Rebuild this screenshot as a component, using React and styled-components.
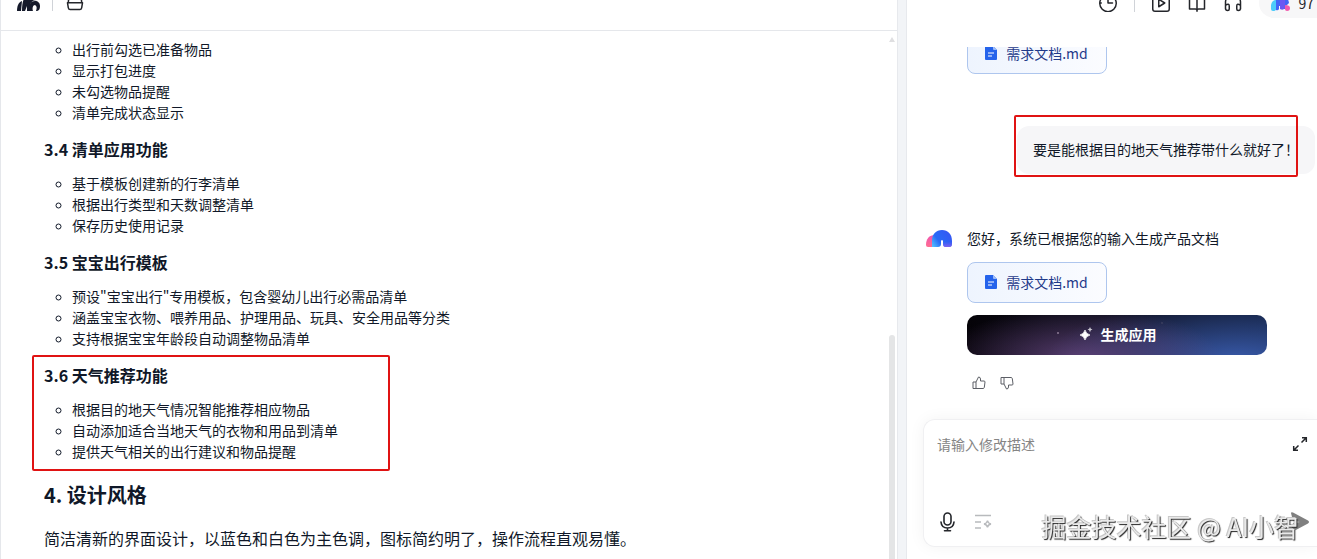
import React from "react";
import styled, { createGlobalStyle, css } from "styled-components";

const GlobalStyle = createGlobalStyle`
  *, *::before, *::after { box-sizing: border-box; }
  body {
    margin: 0;
    background: #fff;
    color: #101828;
    font-family: "Noto Sans CJK SC", "Noto Sans", sans-serif;
    font-size: 14px;
  }
  h2, h3, p, ul { margin: 0; padding: 0; }
  button, textarea { font: inherit; }
`;

const Page = styled.div`
  display: flex;
  height: 100vh;
  overflow: hidden;
`;

const DocPanel = styled.main`
  flex: 1;
  min-width: 0;
  display: flex;
  flex-direction: column;
  border-left: 1px solid #e5e7eb;
`;

const Gutter = styled.div`
  flex: none;
  width: 10px;
  background: #f2f4f7;
  border: solid #e7e9ed;
  border-width: 0 1px;
`;

const ChatPanel = styled.aside`
  flex: none;
  width: 410px;
  display: flex;
  flex-direction: column;
`;

const Header = styled.header`
  flex: none;
  display: flex;
  align-items: flex-end;
  overflow: hidden;
  height: ${(p) => (p.$chat ? 47 : 31)}px;
  padding-bottom: ${(p) => (p.$chat ? 16 : 0)}px;
  border-bottom: ${(p) => (p.$chat ? "none" : "1px solid #e5e7eb")};
`;

const HeaderBar = styled.div`
  flex: 1 0 auto;
  height: 56px;
  display: flex;
  align-items: center;
  justify-content: ${(p) => (p.$end ? "flex-end" : "flex-start")};
  gap: ${(p) => (p.$end ? 16 : 12)}px;
  padding-left: 16px;
`;

const Divider = styled.span`
  width: 1px;
  height: 18px;
  background: #d0d3d8;
`;

const IconButton = styled.button`
  display: inline-flex;
  align-items: center;
  justify-content: center;
  flex: none;
  width: ${(p) => p.$size || 20}px;
  height: ${(p) => p.$size || 20}px;
  padding: 0;
  border: 0;
  background: none;
  color: ${(p) => p.$color || "#24262b"};
  cursor: pointer;
`;

const Credits = styled.button`
  display: flex;
  align-items: center;
  gap: 8px;
  height: 30px;
  padding: 0 3px 0 12px;
  border: 0;
  border-radius: 15px 0 0 15px;
  background: #f7f7f8;
  color: #24262b;
`;

const DocBody = styled.div`
  flex: 1;
  min-height: 0;
  display: flex;
  overflow: hidden;
`;

const Article = styled.article`
  flex: 1;
  min-width: 0;
  padding: 8px 24px 0 43px;
`;

const frame = css`
  content: "";
  position: absolute;
  border: 2px solid #e01313;
  border-radius: 2px;
  pointer-events: none;
`;

const Section = styled.section`
  position: relative;
  padding-top: ${(p) => (p.$first ? 0 : 14)}px;
  ${(p) =>
    p.$framed &&
    css`
      &::after {
        ${frame}
        top: 6px;
        bottom: -9px;
        left: -12px;
        width: 358px;
      }
    `}
`;

const SubTitle = styled.h3`
  font-size: 16px;
  line-height: 24px;
  margin-bottom: 12px;
`;

const Title = styled.h2`
  font-size: 20px;
  line-height: 30px;
  margin: 18px 0 16px;
`;

const Paragraph = styled.p`
  font-size: 16px;
  line-height: 24px;
`;

const List = styled.ul`
  list-style: circle;
  padding-left: 28px;
  line-height: 21px;
  li::marker { font-size: 12px; }
`;

const ScrollTrack = styled.div`
  flex: none;
  width: 6px;
  margin-right: 2px;
  padding-top: 6px;
  display: flex;
  flex-direction: column;
  justify-content: space-between;
`;

const ScrollArrow = styled.span`
  border: 3px solid transparent;
  border-top: 0;
  border-bottom: 5px solid #dfdfe1;
`;

const ScrollThumb = styled.span`
  height: 43%;
  border-radius: 3px 3px 0 0;
  background: #e4e5e6;
`;

const Messages = styled.div`
  flex: 1;
  min-height: 0;
  overflow: hidden;
  display: flex;
  flex-direction: column;
  justify-content: flex-end;
  padding: 0 2px 16px 18px;
`;

const FileCard = styled.button`
  flex: none;
  display: flex;
  align-items: center;
  justify-content: center;
  gap: 8px;
  width: 140px;
  height: 41px;
  padding: 0 2px 2px 0;
  border: 1px solid #aec6ee;
  border-radius: 8px;
  background: linear-gradient(90deg, #eef4fe, #fbfcff);
  color: #1f3a8a;
`;

const EarlierReply = styled.div`
  flex: none;
  padding-left: 42px;
`;

const Bubble = styled.div`
  flex: none;
  position: relative;
  align-self: flex-end;
  margin: 52px 0 54px;
  padding: 12px 16px 14px;
  border-radius: 12px;
  background: #f6f6f8;
  line-height: 22px;
  white-space: nowrap;
  &::after {
    ${frame}
    inset: -11px 17px -3px -3px;
  }
`;

const Reply = styled.div`
  flex: none;
  display: flex;
  gap: 14px;
`;

const Avatar = styled.span`
  flex: none;
  width: 28px;
  height: 20px;
  display: flex;
  align-items: center;
  justify-content: center;
`;

const ReplyBody = styled.div`
  display: flex;
  flex-direction: column;
  gap: 12px;
`;

const ReplyText = styled.p`
  line-height: 20px;
  padding-bottom: 2px;
`;

const GenerateButton = styled.button`
  display: flex;
  align-items: center;
  justify-content: center;
  gap: 8px;
  width: 300px;
  height: 40px;
  padding: 0 0 2px 2px;
  border: 0;
  border-radius: 10px;
  color: #fff;
  font-weight: 700;
  background:
    radial-gradient(circle at 91px 18px, #75647f 0 1px, transparent 1px),
    radial-gradient(circle at 195px 8px, #33385a 0 1px, transparent 1px),
    radial-gradient(ellipse 140px 52px at 38% 110%, #6b4a86cc, transparent),
    radial-gradient(ellipse 190px 60px at 90% 110%, #3859a8, transparent),
    linear-gradient(90deg, #050308, #10101f 50%, #101c38);
`;

const Feedback = styled.div`
  display: flex;
  gap: 12px;
  padding: 8px 4px 0;
`;

const ComposerArea = styled.div`
  flex: none;
  padding: 12px 0 12px 16px;
`;

const Composer = styled.form`
  display: flex;
  flex-direction: column;
  justify-content: space-between;
  height: 128px;
  padding: 14px 7px 14px 13px;
  border: 1px solid #f0f0f2;
  border-right: 0;
  border-radius: 12px 0 0 12px;
  background: #fff;
  box-shadow: 0 0 16px rgba(0, 0, 0, 0.05);
`;

const ComposerRow = styled.div`
  display: flex;
  align-items: ${(p) => (p.$top ? "flex-start" : "center")};
  gap: 16px;
`;

const Input = styled.textarea`
  flex: 1;
  min-width: 0;
  height: 40px;
  padding: 0;
  border: 0;
  outline: 0;
  resize: none;
  line-height: 20px;
  background: none;
  &::placeholder { color: #858585; opacity: 1; }
`;

const Spacer = styled.span`
  flex: 1;
`;

const Watermark = styled.div`
  position: fixed;
  right: 18px;
  bottom: 15px;
  font-size: 25px;
  line-height: 36px;
  white-space: nowrap;
  color: #e9e9e9;
  text-shadow: 1px 1px 1px #222, -1px -1px 0 #c8c8c8;
  pointer-events: none;
`;

const Stroke = ({ size = 18, width = 2, children }) => (
  <svg width={size} height={size} viewBox="0 0 24 24" fill="none" stroke="currentColor"
    strokeWidth={width} strokeLinecap="round" strokeLinejoin="round" aria-hidden="true">
    {children}
  </svg>
);

const MonoLogo = () => (
  <svg width="23" height="17" viewBox="0 0 23 17" fill="#151a2b" aria-hidden="true">
    <path d="M0 17C0 11 2 8 5 7L4 17Z" />
    <path d="M5 17C5 5 8 1 13 1C17 1 20 3 20 6C15 6 13 9 13 12V17H10V12L8 17Z" />
    <path d="M12 17C11 10 14 7 18 7C21 7 23 9 23 12C23 15 22 17 19 17C20 14 20 12 18 11C16 11 15 14 16 17Z" />
  </svg>
);

const CloudLogo = () => (
  <svg width="26" height="17" viewBox="0 0 26 17" aria-hidden="true">
    <defs>
      <linearGradient id="arch" x1="0" y1="1" x2="1" y2="0.4">
        <stop offset="0" stopColor="#55c7ff" />
        <stop offset="0.4" stopColor="#286bf7" />
        <stop offset="1" stopColor="#3458f3" />
      </linearGradient>
      <linearGradient id="side" x1="0" y1="0" x2="0" y2="1">
        <stop offset="0" stopColor="#ef55b0" />
        <stop offset="1" stopColor="#ff6d91" />
      </linearGradient>
      <linearGradient id="foot" x1="0" y1="0" x2="0" y2="1">
        <stop offset="0.4" stopColor="#705bf5" stopOpacity="0" />
        <stop offset="1" stopColor="#8160ee" />
      </linearGradient>
    </defs>
    <path d="M0 15C0 9 3 5 9 5L7 17H2Q0 17 0 15Z" fill="url(#side)" />
    <path d="M6 17V11C6 4 10 0 16 0C22 0 26 4 26 11V14Q26 17 23 17H20Q17 17 17 14V11Q16 9 15 11V14Q15 17 12 17Z" fill="url(#arch)" />
    <path d="M17 8H26V14Q26 17 23 17H20Q17 17 17 14Z" fill="url(#foot)" />
  </svg>
);

const CreditLogo = () => (
  <svg width="19" height="16" viewBox="0 0 19 16" aria-hidden="true">
    <path d="M4 14V6Q5 0 11 0Q17 1 18 8L14 12V14H10V11H8V14Q7 16 5 15Z" fill="#4264f6" />
    <path d="M0 14V10Q1 5 5 5V14Q5 16 2 16Q0 16 0 14Z" fill="#4bcbfa" />
    <path d="M9 4H14V13Q12 16 9 14Z" fill="#6c58f2" />
    <path d="M14 10Q19 10 19 13Q19 16 16 16Q14 16 14 14Z" fill="#f15bac" />
  </svg>
);

const FileIcon = () => (
  <svg width="14" height="16" viewBox="0 0 14 16" aria-hidden="true">
    <path d="M1 2Q1 1 2 1H9L13 5V14Q13 15 12 15H2Q1 15 1 14Z" fill="#2563eb" />
    <path d="M9 1L13 5H10Q9 5 9 4Z" fill="#9dbcf8" />
    <path d="M4 8H10M4 11H8" stroke="#fff" strokeWidth="1.2" />
  </svg>
);

const SparkIcon = () => (
  <svg width="13" height="14" viewBox="0 0 13 14" fill="#fff" aria-hidden="true">
    <path d="M5 3Q6 7 10 8Q6 9 5 13Q4 9 0 8Q4 7 5 3Z" stroke="#fff" strokeWidth=".7" />
    <path d="M10 0Q10.400 2.200 12.500 2.600Q10.400 3 10 5.200Q9.600 3 7.500 2.600Q9.600 2.200 10 0Z" opacity=".75" />
  </svg>
);

const ThumbIcon = ({ down }) => (
  <svg width="14" height="14" viewBox="0 0 14 14" fill="none" stroke="currentColor" strokeLinejoin="round" aria-hidden="true">
    <path
      transform={down ? "matrix(1 0 0 -1 0 14)" : undefined}
      d="M1 6H4V12.500H1ZM4 6L6.500 1Q8.500 1 8.500 3V5H12Q13 5 13 6L12.300 11.500Q12 12.500 11 12.500H4"
    />
  </svg>
);

const MicIcon = () => (
  <svg width="20" height="20" viewBox="0 0 20 20" fill="none" stroke="currentColor" strokeWidth="1.6" strokeLinecap="round" aria-hidden="true">
    <rect x="7" y="1" width="7" height="12" rx="3.500" />
    <path d="M4 10Q4.500 16 10.500 16Q16.500 16 17 10M10.500 16V18.500M7.500 18.800H13.500" />
  </svg>
);

const OptimizeIcon = () => (
  <svg width="18" height="16" viewBox="0 0 18 16" fill="none" stroke="currentColor" strokeWidth="1.400" aria-hidden="true">
    <path d="M1 1.500H17M1 8H7M1 14H7" />
    <path d="M13.500 6.500Q14 9.500 17 10Q14 10.500 13.500 13.500Q13 10.500 10 10Q13 9.500 13.500 6.500Z" />
  </svg>
);

const ExpandIcon = () => (
  <svg width="16" height="16" viewBox="0 0 16 16" fill="none" stroke="currentColor" strokeWidth="1.500" aria-hidden="true">
    <path d="M9.500 6.500L14 2M10 1.700H14.300V6M6.500 9.500L2 14M1.700 10V14.300H6" />
  </svg>
);

const SendIcon = () => (
  <svg width="20" height="20" viewBox="0 0 20 20" fill="currentColor" aria-hidden="true">
    <path d="M1 1Q1 0 3 0.500L18 8.500Q20 10 18 11.500L3 19.500Q1 20 1 18.500L3 11L10 10L3 9Z" />
  </svg>
);

const sections = [
  { items: ["出行前勾选已准备物品", "显示打包进度", "未勾选物品提醒", "清单完成状态显示"] },
  { title: "3.4 清单应用功能", items: ["基于模板创建新的行李清单", "根据出行类型和天数调整清单", "保存历史使用记录"] },
  {
    title: "3.5 宝宝出行模板",
    items: [
      '预设"宝宝出行"专用模板，包含婴幼儿出行必需品清单',
      "涵盖宝宝衣物、喂养用品、护理用品、玩具、安全用品等分类",
      "支持根据宝宝年龄段自动调整物品清单",
    ],
  },
  {
    title: "3.6 天气推荐功能",
    framed: true,
    items: ["根据目的地天气情况智能推荐相应物品", "自动添加适合当地天气的衣物和用品到清单", "提供天气相关的出行建议和物品提醒"],
  },
];

const DocumentFile = () => (
  <FileCard type="button">
    <FileIcon />
    需求文档.md
  </FileCard>
);

export default function App() {
  return (
    <Page lang="zh-CN">
      <GlobalStyle />
      <DocPanel>
        <Header>
          <HeaderBar>
            <MonoLogo />
            <Divider />
            <IconButton type="button" aria-label="项目">
              <Stroke size={20} width={1.8}>
                <path d="M3 13H21M4 12L5 3H19L20 12M3 13L4 19Q4 21 6 21H18Q20 21 20 19L21 13" />
              </Stroke>
            </IconButton>
          </HeaderBar>
        </Header>
        <DocBody>
          <Article>
            {sections.map((s, i) => (
              <Section key={i} $first={i === 0} $framed={s.framed}>
                {s.title && <SubTitle>{s.title}</SubTitle>}
                <List>
                  {s.items.map((item) => (
                    <li key={item}>{item}</li>
                  ))}
                </List>
              </Section>
            ))}
            <Title>4. 设计风格</Title>
            <Paragraph>简洁清新的界面设计，以蓝色和白色为主色调，图标简约明了，操作流程直观易懂。</Paragraph>
          </Article>
          <ScrollTrack>
            <ScrollArrow />
            <ScrollThumb />
          </ScrollTrack>
        </DocBody>
      </DocPanel>
      <Gutter />
      <ChatPanel>
        <Header $chat>
          <HeaderBar $end>
            <IconButton type="button" aria-label="历史">
              <Stroke>
                <path d="M4 5A11 11 0 1 0 20 5M1 12H3M12 5V12H18" />
              </Stroke>
            </IconButton>
            <Divider />
            <IconButton type="button" aria-label="演示">
              <Stroke>
                <rect x="1" y="1" width="22" height="22" rx="3" />
                <path d="M9 7V17L17 12Z" />
              </Stroke>
            </IconButton>
            <IconButton type="button" aria-label="文档">
              <Stroke>
                <path d="M12 4V23M12 4Q11 2 8 2H2V20H10Q12 20 12 22Q12 20 14 20H22V2H16Q13 2 12 4" />
              </Stroke>
            </IconButton>
            <IconButton type="button" aria-label="客服">
              <Stroke>
                <path d="M2 20V11A10 10 0 0 1 22 11V20M2 15Q7 12 7 16V20Q7 22 5 22Q2 22 2 19M22 15Q17 12 17 16V20Q17 22 19 22Q22 22 22 19" />
              </Stroke>
            </IconButton>
            <Credits type="button">
              <CreditLogo />
              97
            </Credits>
          </HeaderBar>
        </Header>
        <Messages>
          <EarlierReply>
            <DocumentFile />
          </EarlierReply>
          <Bubble>要是能根据目的地天气推荐带什么就好了！</Bubble>
          <Reply>
            <Avatar>
              <CloudLogo />
            </Avatar>
            <ReplyBody>
              <ReplyText>您好，系统已根据您的输入生成产品文档</ReplyText>
              <DocumentFile />
              <GenerateButton type="button">
                <SparkIcon />
                生成应用
              </GenerateButton>
              <Feedback>
                <IconButton type="button" aria-label="赞" $size={16} $color="#5c5f66">
                  <ThumbIcon />
                </IconButton>
                <IconButton type="button" aria-label="踩" $size={16} $color="#5c5f66">
                  <ThumbIcon down />
                </IconButton>
              </Feedback>
            </ReplyBody>
          </Reply>
        </Messages>
        <ComposerArea>
          <Composer onSubmit={(e) => e.preventDefault()}>
            <ComposerRow $top>
              <Input aria-label="修改描述" placeholder="请输入修改描述" />
              <IconButton type="button" aria-label="展开">
                <ExpandIcon />
              </IconButton>
            </ComposerRow>
            <ComposerRow>
              <IconButton type="button" aria-label="语音输入">
                <MicIcon />
              </IconButton>
              <IconButton type="button" aria-label="优化描述" $color="#b8babd">
                <OptimizeIcon />
              </IconButton>
              <Spacer />
              <IconButton type="submit" aria-label="发送" $color="#808080">
                <SendIcon />
              </IconButton>
            </ComposerRow>
          </Composer>
        </ComposerArea>
      </ChatPanel>
      <Watermark>掘金技术社区 @ AI小智</Watermark>
    </Page>
  );
}
